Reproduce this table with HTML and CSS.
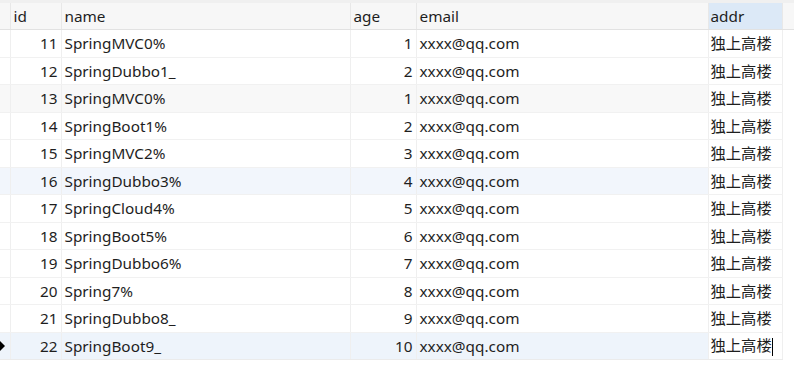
FILE: index.html
```html
<!DOCTYPE html>
<html>
<head>
<meta charset="utf-8">
<link rel="stylesheet" href="styles.css">
</head>
<body>
<div class="topstrip"></div>
<table class="grid">
  <colgroup>
    <col class="c-gut"><col class="c-id"><col class="c-name"><col class="c-age"><col class="c-email"><col class="c-addr"><col class="c-rest">
  </colgroup>
  <thead>
    <tr>
      <th class="gut"></th><th>id</th><th>name</th><th>age</th><th>email</th><th class="sel">addr</th><th class="rest"></th>
    </tr>
  </thead>
  <tbody>
    <tr><td class="gut"></td><td class="num">11</td><td>SpringMVC0%</td><td class="num">1</td><td>xxxx@qq.com</td><td class="addr">独上高楼</td><td class="rest"></td></tr>
    <tr><td class="gut"></td><td class="num">12</td><td>SpringDubbo1_</td><td class="num">2</td><td>xxxx@qq.com</td><td class="addr">独上高楼</td><td class="rest"></td></tr>
    <tr class="hover"><td class="gut"></td><td class="num">13</td><td>SpringMVC0%</td><td class="num">1</td><td>xxxx@qq.com</td><td class="addr">独上高楼</td><td class="rest"></td></tr>
    <tr><td class="gut"></td><td class="num">14</td><td>SpringBoot1%</td><td class="num">2</td><td>xxxx@qq.com</td><td class="addr">独上高楼</td><td class="rest"></td></tr>
    <tr><td class="gut"></td><td class="num">15</td><td>SpringMVC2%</td><td class="num">3</td><td>xxxx@qq.com</td><td class="addr">独上高楼</td><td class="rest"></td></tr>
    <tr class="tint"><td class="gut"></td><td class="num">16</td><td>SpringDubbo3%</td><td class="num">4</td><td>xxxx@qq.com</td><td class="addr">独上高楼</td><td class="rest"></td></tr>
    <tr><td class="gut"></td><td class="num">17</td><td>SpringCloud4%</td><td class="num">5</td><td>xxxx@qq.com</td><td class="addr">独上高楼</td><td class="rest"></td></tr>
    <tr><td class="gut"></td><td class="num">18</td><td>SpringBoot5%</td><td class="num">6</td><td>xxxx@qq.com</td><td class="addr">独上高楼</td><td class="rest"></td></tr>
    <tr><td class="gut"></td><td class="num">19</td><td>SpringDubbo6%</td><td class="num">7</td><td>xxxx@qq.com</td><td class="addr">独上高楼</td><td class="rest"></td></tr>
    <tr><td class="gut"></td><td class="num">20</td><td>Spring7%</td><td class="num">8</td><td>xxxx@qq.com</td><td class="addr">独上高楼</td><td class="rest"></td></tr>
    <tr><td class="gut"></td><td class="num">21</td><td>SpringDubbo8_</td><td class="num">9</td><td>xxxx@qq.com</td><td class="addr">独上高楼</td><td class="rest"></td></tr>
    <tr class="current"><td class="gut"><span class="arrow"></span></td><td class="num">22</td><td>SpringBoot9_</td><td class="num">10</td><td>xxxx@qq.com</td><td class="addr">独上高楼<span class="caret"></span></td><td class="rest"></td></tr>
  </tbody>
</table>
</body>
</html>
```

FILE: styles.css
```css
html, body {
  margin: 0;
  padding: 0;
  background: #ffffff;
}
body {
  width: 794px;
  height: 372px;
  overflow: hidden;
  font-family: "Noto Sans", "Noto Sans CJK SC", sans-serif;
  font-size: 15.3px;
  color: #1e1e1e;
}
.topstrip {
  height: 3px;
  background: #f0f0f0;
}
.grid {
  border-collapse: collapse;
  table-layout: fixed;
  width: 794px;
}
.c-gut { width: 10px; }
.c-id { width: 51px; }
.c-name { width: 289px; }
.c-age { width: 66px; }
.c-email { width: 292px; }
.c-addr { width: 74px; }
.c-rest { width: 12px; }

th, td {
  padding: 0 3px;
  white-space: nowrap;
  overflow: hidden;
  text-align: left;
  font-weight: normal;
  line-height: 20px;
}
th {
  height: 26px;
  background: #f7f7f7;
  border-right: 1px solid #e8e8e8;
  border-bottom: 1px solid #e2e2e2;
}
th.sel {
  background: #dce9f7;
}
th.rest {
  border-right: none;
  background: #f7f7f7;
}
td {
  height: 26.5px;
  border-right: 1px solid #efefef;
  border-bottom: 1px solid #f1f1f1;
}
td.num {
  text-align: right;
}
td.gut, th.gut {
  padding: 0;
  position: relative;
}
td.rest {
  border: none;
  background: #ffffff;
}
td.addr {
  background: #ffffff;
  position: relative;
  padding-left: 2px;
  padding-right: 0;
}
th.sel {
  padding-left: 2px;
}
tr.hover td { background: #f8f8f8; }
tr.tint td { background: #f2f6fc; }
tr.current td { background: #eef4fb; }
tr.hover td.addr, tr.tint td.addr, tr.current td.addr { background: #ffffff; }
tr.hover td.rest, tr.tint td.rest, tr.current td.rest { background: #ffffff; }
tr.current td { border-bottom-color: #ebebeb; }

.arrow {
  position: absolute;
  left: 0;
  top: 50%;
  margin-top: -5px;
  width: 0;
  height: 0;
  border-top: 5px solid transparent;
  border-bottom: 5px solid transparent;
  border-left: 5px solid #000000;
}
.caret {
  display: inline-block;
  width: 1px;
  height: 18px;
  background: #000000;
  vertical-align: middle;
  margin-left: 0;
}
```
